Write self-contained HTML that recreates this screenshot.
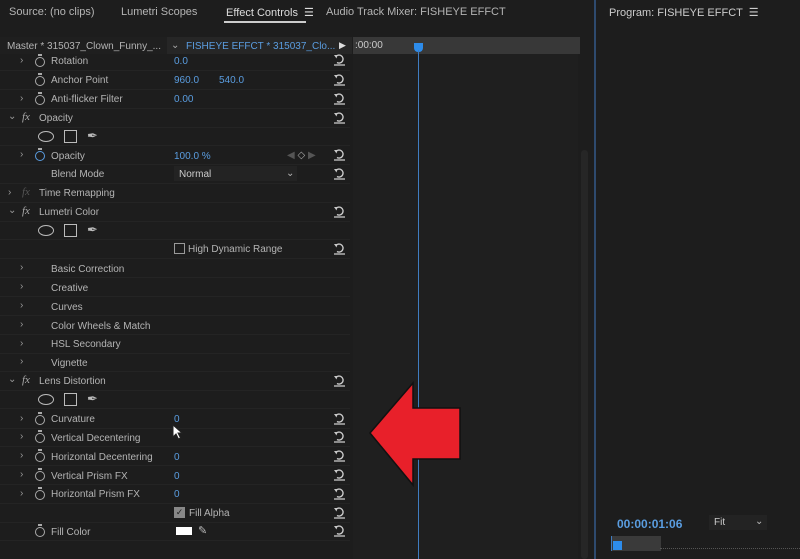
<!DOCTYPE html><html><head><style>
body{margin:0;width:800px;height:559px;background:#1d1d1d;font-family:"Liberation Sans",sans-serif;font-size:10px;color:#b4b4b4;overflow:hidden;position:relative}
.a{position:absolute;white-space:nowrap}
.row{position:absolute;left:0;width:350px;height:18px;border-bottom:1px solid #242424}
.b{color:#5a9de0}
.chev{position:absolute;left:20px;color:#999;font-size:10px}
.sw{position:absolute;left:35px;width:8px;height:8px;border:1.3px solid #aaa;border-radius:50%}
.sw:before{content:"";position:absolute;left:2px;top:-4px;width:4px;height:2px;background:#aaa}
.rs{position:absolute;left:333px;width:13px;height:13px}
.fx{position:absolute;left:22px;font-style:italic;font-family:"Liberation Serif",serif;color:#aaa;font-size:11px}
</style></head><body>
<svg width="0" height="0" style="position:absolute"><defs><symbol id="r" viewBox="0 0 13 13"><path d="M3 3.5 A4 4 0 1 1 4 9.5" fill="none" stroke="#c8c8c8" stroke-width="1.4"/><path d="M1 2 L4.5 2 L3.5 5.5 Z" fill="#c8c8c8"/><path d="M1 12 H12" stroke="#c8c8c8" stroke-width="1.3"/></symbol></defs></svg>
<div class="a" style="left:9px;top:6px;font-size:11px">Source: (no clips)</div>
<div class="a" style="left:121px;top:6px;font-size:11px">Lumetri Scopes</div>
<div class="a" style="left:226px;top:6px;font-size:11px;color:#ddd">Effect Controls &nbsp;☰</div>
<div class="a" style="left:224px;top:21px;width:82px;height:2px;background:#ccc"></div>
<div class="a" style="left:326px;top:6px;font-size:11px">Audio Track Mixer: FISHEYE EFFCT</div>
<div class="a" style="left:609px;top:6px;font-size:11px;color:#ccc">Program: FISHEYE EFFCT &nbsp;☰</div>
<div class="a" style="left:594px;top:0;width:2px;height:559px;background:#2e4a6e"></div>
<div class="a" style="left:0;top:37px;width:352px;height:17px;background:#1f1f1f"></div>
<div class="a" style="left:7px;top:41px">Master * 315037_Clown_Funny_...</div>
<div class="a" style="left:167px;top:37px;width:185px;height:17px;background:#262626"></div>
<div class="a" style="left:171px;top:40px;color:#aaa">⌄</div>
<div class="a b" style="left:186px;top:41px">FISHEYE EFFCT * 315037_Clo...</div>
<div class="a" style="left:339px;top:40px;color:#ddd;font-size:9px">▶</div>
<div class="a" style="left:353px;top:37px;width:227px;height:17px;background:#383838"></div>
<div class="a" style="left:355px;top:40px;color:#ccc">:00:00</div>
<div class="a" style="left:353px;top:54px;width:225px;height:505px;background:#1f1f1f"></div>
<div class="a" style="left:581px;top:150px;width:7px;height:409px;background:#262626;border-radius:4px"></div>
<div class="a" style="left:414px;top:43px;width:9px;height:9px;background:#2d8ceb;border-radius:0 0 4px 4px"></div>
<div class="a" style="left:418px;top:50px;width:1px;height:509px;background:#3f7cc0"></div>

<div class="row" style="top:52px"><span class="chev" style="top:3px">›</span><span class="sw" style="top:5px"></span><span class="a" style="left:51px;top:4px">Rotation</span><span class="a b" style="left:174px;top:4px">0.0</span><svg class="rs" style="top:1px"><use href="#r"/></svg></div>
<div class="row" style="top:71px"><span class="sw" style="top:5px"></span><span class="a" style="left:51px;top:4px">Anchor Point</span><span class="a b" style="left:174px;top:4px">960.0</span><span class="a b" style="left:219px;top:4px">540.0</span><svg class="rs" style="top:2px"><use href="#r"/></svg></div>
<div class="row" style="top:90px"><span class="chev" style="top:3px">›</span><span class="sw" style="top:5px"></span><span class="a" style="left:51px;top:4px">Anti-flicker Filter</span><span class="a b" style="left:174px;top:4px">0.00</span><svg class="rs" style="top:2px"><use href="#r"/></svg></div>
<div class="row" style="top:109px"><span class="chev" style="left:8px;top:2px">⌄</span><span class="fx" style="top:2px">fx</span><span class="a" style="left:39px;top:4px">Opacity</span><svg class="rs" style="top:2px"><use href="#r"/></svg></div>
<div class="row" style="top:127px"><span class="a" style="left:38px;top:4px;width:14px;height:9px;border:1.3px solid #bbb;border-radius:50%"></span><span class="a" style="left:64px;top:3px;width:11px;height:11px;border:1.3px solid #bbb"></span><span class="a" style="left:87px;top:1px;color:#bbb;font-size:13px">✒</span></div>
<div class="row" style="top:146px"><span class="chev" style="top:3px">›</span><span class="sw" style="top:5px;border-color:#5a9de0"></span><span class="a" style="left:51px;top:5px">Opacity</span><span class="a b" style="left:174px;top:5px">100.0 %</span><span class="a" style="left:287px;top:4px;color:#555">◀ <span style="color:#aaa">◇</span> ▶</span><svg class="rs" style="top:2px"><use href="#r"/></svg></div>
<div class="row" style="top:165px"><span class="a" style="left:51px;top:4px">Blend Mode</span><span class="a" style="left:174px;top:1px;width:123px;height:15px;background:#232323"></span><span class="a" style="left:179px;top:4px;color:#ccc">Normal</span><span class="a" style="left:286px;top:3px">⌄</span><svg class="rs" style="top:2px"><use href="#r"/></svg></div>
<div class="row" style="top:184px"><span class="chev" style="left:8px;top:3px">›</span><span class="fx" style="top:2px;color:#555">fx</span><span class="a" style="left:39px;top:4px">Time Remapping</span></div>
<div class="row" style="top:203px"><span class="chev" style="left:8px;top:2px">⌄</span><span class="fx" style="top:2px">fx</span><span class="a" style="left:39px;top:4px">Lumetri Color</span><svg class="rs" style="top:2px"><use href="#r"/></svg></div>
<div class="row" style="top:221px"><span class="a" style="left:38px;top:4px;width:14px;height:9px;border:1.3px solid #bbb;border-radius:50%"></span><span class="a" style="left:64px;top:3px;width:11px;height:11px;border:1.3px solid #bbb"></span><span class="a" style="left:87px;top:1px;color:#bbb;font-size:13px">✒</span></div>
<div class="row" style="top:240px"><span class="a" style="left:174px;top:3px;width:9px;height:9px;border:1.3px solid #999"></span><span class="a" style="left:188px;top:4px">High Dynamic Range</span><svg class="rs" style="top:2px"><use href="#r"/></svg></div>
<div class="row" style="top:259px"><span class="chev" style="top:3px">›</span><span class="a" style="left:51px;top:5px">Basic Correction</span></div>
<div class="row" style="top:278px"><span class="chev" style="top:3px">›</span><span class="a" style="left:51px;top:5px">Creative</span></div>
<div class="row" style="top:297px"><span class="chev" style="top:3px">›</span><span class="a" style="left:51px;top:5px">Curves</span></div>
<div class="row" style="top:316px"><span class="chev" style="top:3px">›</span><span class="a" style="left:51px;top:5px">Color Wheels &amp; Match</span></div>
<div class="row" style="top:335px"><span class="chev" style="top:3px">›</span><span class="a" style="left:51px;top:4px">HSL Secondary</span></div>
<div class="row" style="top:353px"><span class="chev" style="top:3px">›</span><span class="a" style="left:51px;top:5px">Vignette</span></div>
<div class="row" style="top:372px"><span class="chev" style="left:8px;top:2px">⌄</span><span class="fx" style="top:2px">fx</span><span class="a" style="left:39px;top:4px">Lens Distortion</span><svg class="rs" style="top:2px"><use href="#r"/></svg></div>
<div class="row" style="top:390px"><span class="a" style="left:38px;top:4px;width:14px;height:9px;border:1.3px solid #bbb;border-radius:50%"></span><span class="a" style="left:64px;top:3px;width:11px;height:11px;border:1.3px solid #bbb"></span><span class="a" style="left:87px;top:1px;color:#bbb;font-size:13px">✒</span></div>
<div class="row" style="top:410px"><span class="chev" style="top:3px">›</span><span class="sw" style="top:5px"></span><span class="a" style="left:51px;top:4px">Curvature</span><span class="a b" style="left:174px;top:4px">0</span><svg class="rs" style="top:2px"><use href="#r"/></svg></div>
<div class="row" style="top:428px"><span class="chev" style="top:3px">›</span><span class="sw" style="top:5px"></span><span class="a" style="left:51px;top:5px">Vertical Decentering</span><svg class="rs" style="top:2px"><use href="#r"/></svg></div>
<div class="row" style="top:447px"><span class="chev" style="top:3px">›</span><span class="sw" style="top:5px"></span><span class="a" style="left:51px;top:5px">Horizontal Decentering</span><span class="a b" style="left:174px;top:5px">0</span><svg class="rs" style="top:2px"><use href="#r"/></svg></div>
<div class="row" style="top:466px"><span class="chev" style="top:3px">›</span><span class="sw" style="top:5px"></span><span class="a" style="left:51px;top:5px">Vertical Prism FX</span><span class="a b" style="left:174px;top:5px">0</span><svg class="rs" style="top:2px"><use href="#r"/></svg></div>
<div class="row" style="top:485px"><span class="chev" style="top:3px">›</span><span class="sw" style="top:5px"></span><span class="a" style="left:51px;top:4px">Horizontal Prism FX</span><span class="a b" style="left:174px;top:4px">0</span><svg class="rs" style="top:2px"><use href="#r"/></svg></div>
<div class="row" style="top:504px"><span class="a" style="left:174px;top:3px;width:11px;height:11px;background:#888;color:#222;font-size:9px;text-align:center;line-height:11px">✓</span><span class="a" style="left:189px;top:4px">Fill Alpha</span><svg class="rs" style="top:2px"><use href="#r"/></svg></div>
<div class="row" style="top:522px"><span class="sw" style="top:5px"></span><span class="a" style="left:51px;top:5px">Fill Color</span><span class="a" style="left:176px;top:5px;width:16px;height:8px;background:#fff"></span><span class="a" style="left:198px;top:2px;color:#bbb;font-size:11px">✎</span><svg class="rs" style="top:2px"><use href="#r"/></svg></div>
<svg class="a" style="left:172px;top:424px" width="12" height="16"><path d="M1 1 L1 13 L4 10 L6.5 15 L8.5 14 L6 9 L10 9 Z" fill="#fff" stroke="#222" stroke-width="1"/></svg>

<svg class="a" style="left:0;top:0" width="800" height="559"><polygon points="370,433 413,383 413,408 460,408 460,459 413,459 413,485" fill="#e8202a" stroke="#111" stroke-width="1.5"/></svg>

<div class="a" style="left:617px;top:517px;color:#5a9de0;font-size:12px;font-weight:bold">00:00:01:06</div>
<div class="a" style="left:709px;top:515px;width:58px;height:15px;background:#232323"></div>
<div class="a" style="left:714px;top:517px;color:#ccc">Fit</div>
<div class="a" style="left:755px;top:516px;color:#bbb">⌄</div>
<div class="a" style="left:611px;top:536px;width:49px;height:15px;background:#3a3a3a;border-left:1px solid #3f7cc0"></div>
<div class="a" style="left:613px;top:541px;width:9px;height:9px;background:#2d8ceb"></div>
<div class="a" style="left:660px;top:548px;width:140px;height:1px;border-top:1px dotted #555"></div>
</body></html>
